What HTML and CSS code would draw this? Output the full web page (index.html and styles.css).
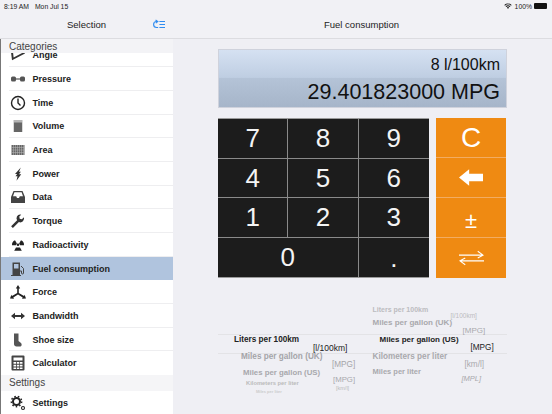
FILE: index.html
```html
<!DOCTYPE html>
<html lang="en">
<head>
<meta charset="utf-8">
<title>Fuel consumption</title>
<link rel="stylesheet" href="styles.css">
</head>
<body>
<div class="app">
  <div class="status">
    <span class="time">8:19 AM</span><span class="date">Mon Jul 15</span>
    <span class="spacer"></span>
    <svg class="wifi" viewBox="0 0 12 9"><path d="M0.5 3a8 8 0 0 1 11 0l-1 1.1a6.5 6.5 0 0 0-9 0zM2.4 5a5.2 5.2 0 0 1 7.2 0l-1 1.1a3.7 3.7 0 0 0-5.200 0zM4.300 7a2.400 2.400 0 0 1 3.400 0L6 8.800z"/></svg>
    <span class="pct">100%</span>
    <span class="battery"></span>
  </div>
  <div class="columns">
    <aside class="side">
      <header class="nav side-nav">
        <span class="nav-title">Selection</span>
        <svg class="nav-icon" viewBox="0 0 14 12" fill="none" stroke="#2f8cf0" stroke-width="1.300"><path d="M6 2.500H4.200a3.500 3.500 0 0 0 0 7H6"/><path d="M2.500 0.800L5 2.600 2.800 4.400" transform="translate(0.500 0)"/><path d="M7.500 2.500H14M7.500 6H14M7.500 9.500H14"/></svg>
      </header>
      <div class="list">
        <div class="head head-top">Categories</div>
        <div class="scroll">
          <div class="row"><svg class="ic" viewBox="0 0 16 16"><path d="M1 5h2l.6 5.500L14 5l1 1.600L2 13.200z" fill="#333"/></svg><span>Angle</span></div>
          <div class="row"><svg class="ic" viewBox="0 0 16 16"><rect x="1" y="5.500" width="5" height="5" rx="1.500" fill="#555"/><rect x="10" y="5.500" width="5" height="5" rx="1.500" fill="#555"/><path d="M5 7.400h6v1.200H5z" fill="#555"/></svg><span>Pressure</span></div>
          <div class="row"><svg class="ic" viewBox="0 0 16 16" fill="none" stroke="#222" stroke-width="1.400"><circle cx="8" cy="8" r="6.500"/><path d="M8 3.500V8l2.500 2.500"/></svg><span>Time</span></div>
          <div class="row"><svg class="ic" viewBox="0 0 16 16"><path d="M3.500 2h9v12h-9z" fill="#b5b5b5"/><path d="M4 4.500h8V14H4z" fill="#666"/></svg><span>Volume</span></div>
          <div class="row"><svg class="ic" viewBox="0 0 16 16"><path d="M1.500 3h13v10h-13z" fill="#666"/><path d="M3.500 3v10M5.500 3v10M7.500 3v10M9.500 3v10M11.500 3v10M13.500 3v10M1.500 5.500h13M1.500 8h13M1.500 10.500h13" stroke="#bbb" stroke-width=".5"/></svg><span>Area</span></div>
          <div class="row"><svg class="ic" viewBox="0 0 16 16"><path d="M10.800 1.500L5 8h2.200L5.500 10.200h2L6.500 14.800 11.200 8.200H9l1.900-2.400H9z" fill="#333"/></svg><span>Power</span></div>
          <div class="row"><svg class="ic" viewBox="0 0 16 16"><path d="M3.500 2h9L15 8v6H1V8zM4.400 3.200L3 7.300h3.200l.8 1.700h2l.8-1.700H13l-1.400-4.100z" fill="#444"/></svg><span>Data</span></div>
          <div class="row"><svg class="ic" viewBox="0 0 16 16"><path d="M10 1.500a3.800 3.800 0 0 1 1.200.2L9.300 3.600l.4 2.200 2.200.5 2-2a3.800 3.800 0 0 1-5 4.800l-6 6-1.800-1.800 6-6A3.800 3.800 0 0 1 10 1.500z" fill="#333"/></svg><span>Torque</span></div>
          <div class="row"><svg class="ic" viewBox="0 0 16 16"><circle cx="8" cy="7.700" r="1.300"/><path d="M5 2.800L6.900 6 5.900 7.700H2a5 5 0 0 1 3-4.900zM11 2.800L9.100 6l1 1.700H14a5 5 0 0 0-3-4.900zM6 10h4l1.800 3.200H4.200z" transform="translate(0 .5)"/></svg><span>Radioactivity</span></div>
          <div class="row row-on"><svg class="ic" viewBox="0 0 16 16"><path d="M2.500 1.500h7.500V14H11v1H1v-1h1.500zM4 3v4.500h4.500V3z" fill="#444"/><path d="M11 5l2.500 2.500V12a1 1 0 0 1-2 0v-2H10" fill="none" stroke="#444" stroke-width="1"/></svg><span>Fuel consumption</span></div>
          <div class="row"><svg class="ic" viewBox="0 0 16 16"><path d="M8 1L10.200 4.500H8.800V9L14 12l.6-1.200L16 14.500l-4 .2.700-1.300L8 10.400 3.300 13.400l.7 1.300-4-.2 1.400-3.700L2 12l5.200-3V4.500H5.800z"/></svg><span>Force</span></div>
          <div class="row"><svg class="ic" viewBox="0 0 16 16"><path d="M1 8l4-3.200V7h6V4.800L15 8l-4 3.200V9H5v2.200z" fill="#333"/></svg><span>Bandwidth</span></div>
          <div class="row"><svg class="ic" viewBox="0 0 16 16"><path d="M4 1.500h4.500v7.500l2.500 2c1 .9 1 3.500-1 3.500H6.500C5 14.500 4 13.500 4 12z" fill="#555"/></svg><span>Shoe size</span></div>
          <div class="row row-tail"><svg class="ic" viewBox="0 0 16 16"><path d="M2.500 .5h11a1 1 0 0 1 1 1v13a1 1 0 0 1-1 1h-11a1 1 0 0 1-1-1v-13a1 1 0 0 1 1-1zM3.500 2.500v3h9v-3zM3.500 7v1.800h2.500V7zM6.800 7v1.800h2.500V7zM10 7v1.800h2.500V7zM3.500 9.800v1.800h2.500V9.800zM6.800 9.800v1.800h2.500V9.800zM10 9.800v1.800h2.500V9.800zM3.500 12.500v1.500h2.500v-1.500zM6.800 12.500v1.500h2.500v-1.500zM10 12.500v1.500h2.500v-1.500z" fill="#444" fill-rule="evenodd"/></svg><span>Calculator</span></div>
          <div class="head">Settings</div>
          <div class="row row-set"><svg class="ic" viewBox="0 0 16 16"><circle cx="6.500" cy="6.500" r="3.500" fill="none" stroke="#222" stroke-width="2"/><circle cx="6.500" cy="6.500" r="5.200" fill="none" stroke="#222" stroke-width="1.400" stroke-dasharray="1.600 2"/><circle cx="13" cy="13" r="1.500" fill="none" stroke="#222" stroke-width="1.100"/></svg><span>Settings</span></div>
        </div>
      </div>
    </aside>
    <main class="main">
      <header class="nav main-nav"><span class="nav-title">Fuel consumption</span></header>
      <div class="work">
        <div class="display">
          <div class="disp-a">8 l/100km</div>
          <div class="disp-b">29.401823000 MPG</div>
        </div>
        <div class="pad">
          <div class="keys">
            <div class="key">7</div><div class="key">8</div><div class="key">9</div>
            <div class="key">4</div><div class="key">5</div><div class="key">6</div>
            <div class="key">1</div><div class="key">2</div><div class="key">3</div>
            <div class="key key-wide">0</div><div class="key key-dot">.</div>
          </div>
          <div class="ops">
            <div class="op">C</div>
            <div class="op"><svg class="op-back" viewBox="0 0 26 18"><path d="M0 9L11 0v5h15v8H11v5z" fill="#fff"/></svg></div>
            <div class="op op-pm">±</div>
            <div class="op"><svg class="op-swap" viewBox="0 0 26 16" fill="none" stroke="#fff" stroke-width="1.100"><path d="M0 5h25M19.500 1l5.500 4-5.500 3M26 11H1M6.500 8l-5.500 3 5.500 4"/></svg></div>
          </div>
        </div>
        <div class="picker">
          <div class="wheel wheel-l">
            <div class="it it-sel l1"><span class="n">Liters per 100km</span><span class="u">[l/100km]</span></div>
            <div class="it l2"><span class="n">Miles per gallon (UK)</span><span class="u">[MPG]</span></div>
            <div class="it l3"><span class="n">Miles per gallon (US)</span><span class="u">[MPG]</span></div>
            <div class="it l4"><span class="n">Kilometers per liter</span><span class="u">[km/l]</span></div>
            <div class="it l5"><span class="n">Miles per liter</span></div>
          </div>
          <div class="wheel wheel-r">
            <div class="it r1"><span class="n">Liters per 100km</span><span class="u">[l/100km]</span></div>
            <div class="it r2"><span class="n">Miles per gallon (UK)</span><span class="u">[MPG]</span></div>
            <div class="it it-sel r3"><span class="n">Miles per gallon (US)</span><span class="u">[MPG]</span></div>
            <div class="it r4"><span class="n">Kilometers per liter</span><span class="u">[km/l]</span></div>
            <div class="it r5"><span class="n">Miles per liter</span><span class="u">[MPL]</span></div>
          </div>
        </div>
      </div>
    </main>
  </div>
</div>
</body>
</html>
```
FILE: styles.css
```css
* { box-sizing: border-box; }
html, body { margin: 0; height: 100%; }
body { font-family: "Liberation Sans", Arial, sans-serif; color: #111; background: #efeff4; overflow: hidden; }
.app { width: 552px; height: 414px; display: flex; flex-direction: column; background: #efeff4; }

.status { height: 12px; display: flex; align-items: center; padding: 0 2px 0 4px; font-size: 6.800px; color: #222; background: #f1f1f5; flex: none; }
.date { margin-left: 6px; }
.spacer { flex: 1; }
.wifi { width: 8px; height: 6px; fill: #111; margin-right: 3px; }
.pct { margin-right: 2px; }
.battery { width: 13px; height: 6px; background: #111; border-radius: 1px; margin-right: 3px; }

.columns { flex: 1; display: flex; min-height: 0; }
.side { width: 173px; flex: none; display: flex; flex-direction: column; }
.nav { height: 27px; flex: none; display: flex; align-items: center; background: #f1f1f5; border-bottom: 1px solid #dcdce0; }
.nav-title { font-size: 9.500px; color: #222; }
.side-nav { padding: 0 7px 2px 67px; justify-content: space-between; }
.nav-icon { width: 12px; height: 11px; margin-right: 1px; }
.main-nav { justify-content: center; padding-bottom: 2px; padding-right: 2px; }

.list { flex: 1; position: relative; overflow: hidden; background: #fff; border-left: 1.500px solid #777; }
.head { height: 15.500px; background: #f5f5f7; font-size: 10px; color: #444; padding-left: 8px; line-height: 16px; }
.head-top { position: absolute; top: 0; left: 0; right: 0; z-index: 2; height: 14px; line-height: 15px; background: #f3f3f6; }
.scroll { margin-top: 4.500px; }
.row { height: 23.700px; display: flex; align-items: center; font-size: 9px; font-weight: 700; color: #222; fill: #222; padding-left: 9px; position: relative; }
.row::after { content: ""; position: absolute; left: 8px; right: 0; bottom: 0; height: 1px; background: #eeeef0; }
.row .ic { width: 16px; height: 16px; margin-right: 6.500px; flex: none; }
.row-on { background: #b0c4de; }
.row-on::after, .row-tail::after { display: none; }
.row-set { height: 24px; }

.main { flex: 1; display: flex; flex-direction: column; min-width: 0; }
.work { flex: 1; padding: 10px 45px 0 45px; display: flex; flex-direction: column; }
.display { height: 59px; background: linear-gradient(#d5e1f2 0%, #bfcee2 48%, #b4c3d7 50%, #a6b5c9 100%); border: 1px solid #cfd2dc; text-align: right; padding: 4px 6px 0 0; color: #111; flex: none; }
.disp-a { font-size: 16px; line-height: 21px; }
.disp-b { font-size: 21.500px; line-height: 26px; margin-top: 4px; }

.pad { display: flex; gap: 7px; margin-top: 10px; flex: none; }
.keys { width: 211px; height: 160px; display: grid; grid-template-columns: repeat(3, 1fr); grid-template-rows: repeat(4, 1fr); background: #1c1c1c; border-top: 1px solid #9a9a9a; border-bottom: 1px solid #9a9a9a; }
.key { display: flex; align-items: center; justify-content: center; color: #f4f4f4; font-size: 26px; border-right: 1px solid #8a8a8a; border-bottom: 1px solid #8a8a8a; padding-top: 1px; }
.key:nth-child(3n) { border-right: 0; }
.key-wide { grid-column: span 2; border-bottom: 0; }
.key-dot { border-right: 0; border-bottom: 0; padding-top: 3px; }
.ops { width: 70px; height: 160px; display: grid; grid-template-rows: repeat(4, 1fr); background: #ef8a12; }
.op { display: flex; align-items: center; justify-content: center; color: #fff; font-size: 28px; border-bottom: 1px solid #f2ac62; }
.op:last-child { border-bottom: 0; }
.op-pm { font-size: 22px; padding-top: 6px; }
.op-back { width: 24px; height: 17px; }
.op-swap { width: 25px; height: 16px; }

.picker { flex: 1; display: grid; grid-template-columns: 1fr 1fr; position: relative; }
.picker::before { content: ""; position: absolute; left: 0; right: 0; top: 56px; height: 18px; border-top: 1px solid #e3e3e6; border-bottom: 1px solid #e3e3e6; }
.wheel { position: relative; }
.it { height: 16px; display: flex; flex-direction: column; color: #a9a9ad; }
.it .n, .it .u { display: block; white-space: nowrap; line-height: 8px; height: 8px; font-weight: 700; }
.it .u { font-weight: 400; }
.it-sel { color: #222; }

.wheel-l { padding-top: 58px; }
.l1 { height: 17px; font-size: 8.200px; padding-left: 16px; }
.l1 .u { padding-left: 79px; font-size: 8.500px; }
.l2 { height: 15px; font-size: 8.200px; padding-left: 23px; color: #a4a4a8; }
.l2 .u { padding-left: 91px; }
.l3 { height: 13px; font-size: 7.800px; padding-left: 25px; padding-top: 1px; color: #a8a8ac; }
.l3 .u { padding-left: 90px; line-height: 6px; height: 6px; }
.l4 { height: 9px; font-size: 5.800px; padding-left: 28px; color: #bbb; }
.l4 .n { line-height: 5px; height: 5px; }
.l4 .u { padding-left: 90px; line-height: 4px; height: 4px; font-size: 5.500px; }
.l5 { height: 4px; font-size: 4px; padding-left: 38px; color: #ccc; }
.l5 .n { line-height: 4px; height: 4px; }

.wheel-r { padding-top: 29px; }
.r1 { height: 11px; font-size: 7px; padding-left: 10px; color: #bcbcc0; }
.r1 .n { height: 6px; line-height: 6px; }
.r1 .u { padding-left: 78px; font-size: 6.500px; margin-top: -1px; }
.r2 { height: 18px; font-size: 8px; padding-left: 10px; padding-top: 1px; }
.r2 .u { padding-left: 90px; }
.r3 { height: 17px; font-size: 8px; padding-left: 17px; }
.r3 .u { padding-left: 91px; font-size: 8.200px; }
.r4 { font-size: 8.200px; padding-left: 10px; height: 15px; }
.r4 .u { padding-left: 92px; }
.r5 { font-size: 7.500px; padding-left: 10px; }
.r5 .u { padding-left: 89px; font-style: italic; line-height: 6px; }
```
